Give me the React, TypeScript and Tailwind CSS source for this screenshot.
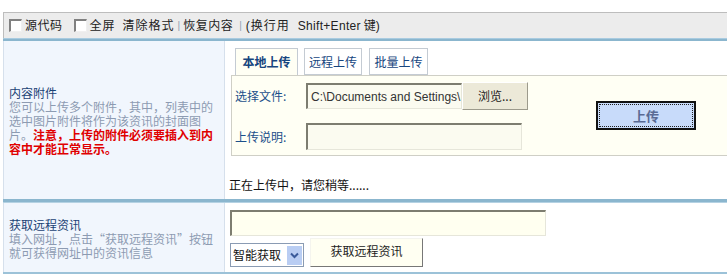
import React from "react";

function CheckBox() {
  return (
    <span className="inline-block w-[13px] h-[13px] bg-white border-t-2 border-l-2 border-t-[#808080] border-l-[#808080] border-r border-b border-r-[#f0f0f0] border-b-[#f0f0f0]" />
  );
}

export default function App() {
  return (
    <div className="w-[727px] h-[275px] bg-white overflow-hidden text-[12px] leading-[14px] font-['Liberation_Sans','Noto_Sans_CJK_SC',sans-serif]">
      <div className="h-[12px]" />
      {/* toolbar */}
      <div className="ml-[3px] h-[26px] bg-[#ececec] border-t border-l border-[#bdbdbd] flex items-center text-[#222] whitespace-nowrap">
        <span className="ml-[5px] flex"><CheckBox /></span>
        <span className="ml-[3px] tracking-[0.5px]">源代码</span>
        <span className="ml-[11px] flex"><CheckBox /></span>
        <span className="ml-[3px] tracking-[1px]">全屏</span>
        <span className="ml-[7px] tracking-[1px]">清除格式</span>
        <span className="ml-[3px] text-[#8fa0b0] text-[10px]">|</span>
        <span className="ml-[3px] tracking-[0.5px]">恢复内容</span>
        <span className="ml-[6px] text-[#8fa0b0] text-[10px]">|</span>
        <span className="ml-[4px] tracking-[1px]">(换行用</span>
        <span className="ml-[8px] tracking-[0.3px]">Shift+Enter</span>
        <span className="ml-[3px]">键)</span>
      </div>
      <div className="ml-[3px] h-[3px] bg-[#8bb6ce] border-t border-[#a9cbe0]" />

      {/* section 1 */}
      <div className="ml-[3px] h-[158px] flex">
        <div className="w-[222px] bg-[#f1f6fd] border-l border-r border-[#d6e0ec] flex items-center pl-[5px] pr-[6px] font-['Noto_Sans_CJK_SC',sans-serif]">
          <div className="w-[208px] pt-[2px]">
            <div className="text-[#1b4275]">内容附件</div>
            <div className="text-[#8d9bb2]">
              您可以上传多个附件，其中，列表中的选中图片附件将作为该资讯的封面图片。
              <span className="text-[#e00000] font-bold">注意，上传的附件必须要插入到内容中才能正常显示。</span>
            </div>
          </div>
        </div>
        <div className="flex-1 pt-[7px]">
          {/* tabs */}
          <div className="ml-[10px] flex items-end h-[27px] gap-[6px]">
            <div className="w-[63px] h-[27px] border border-b-0 border-[#c4cbd3] bg-[#fffff4] flex items-center justify-center text-[#16457e] font-bold font-['Noto_Sans_CJK_SC',sans-serif]">本地上传</div>
            <div className="w-[58px] h-[27px] border border-[#c4cbd3] bg-white flex items-center justify-center text-[#16457e] font-['Noto_Sans_CJK_SC',sans-serif]">远程上传</div>
            <div className="w-[59px] h-[27px] border border-[#c4cbd3] bg-white flex items-center justify-center text-[#16457e] ml-[1px] font-['Noto_Sans_CJK_SC',sans-serif]">批量上传</div>
          </div>
          {/* panel */}
          <div className="ml-[6px] h-[81px] border-t border-b border-l border-[#cfcfc6] bg-[#fffff4] flex items-center">
            <div className="flex flex-col gap-[13px] pl-[3px] pt-[1px]">
              <div className="flex items-center h-[28px]">
                <span className="w-[71px] text-[#1c4f8a] font-['Noto_Sans_CJK_SC',sans-serif]">选择文件:</span>
                <div className="w-[156px] h-[26px] bg-[#fbfbf0] border-t-2 border-l-2 border-t-[#7d7d70] border-l-[#7d7d70] border-r border-b border-r-[#e6e6da] border-b-[#e6e6da] flex items-center pl-[3px] overflow-hidden whitespace-nowrap text-[#333]">
                  C:\Documents and Settings\
                </div>
                <div className="w-[66px] h-[28px] bg-[#ece9d8] border border-t-white border-l-white border-r-[#9c9a8c] border-b-[#9c9a8c] flex items-center justify-center text-[#222] font-['Noto_Sans_CJK_SC',sans-serif]">
                  浏览...
                </div>
              </div>
              <div className="flex items-center h-[27px]">
                <span className="w-[71px] text-[#1c4f8a] font-['Noto_Sans_CJK_SC',sans-serif]">上传说明:</span>
                <div className="w-[216px] h-[27px] bg-[#fbfbf0] border-t-2 border-l-2 border-t-[#7d7d70] border-l-[#7d7d70] border-r border-b border-r-[#e6e6da] border-b-[#e6e6da]" />
              </div>
            </div>
            <div className="ml-[68px] w-[100px] h-[29px] bg-[#c8dbfa] border-2 border-[#111] p-[1px]">
              <div className="w-full h-full border border-dotted border-[#222] flex items-center justify-center text-[#5a6b95] font-bold text-[13px] font-['Noto_Sans_CJK_SC',sans-serif]">
                上传
              </div>
            </div>
          </div>
          <div className="mt-[22px] ml-[4px] text-[#111] font-['Noto_Sans_CJK_SC',sans-serif]">正在上传中，请您稍等......</div>
        </div>
      </div>
      <div className="ml-[3px] h-[4px] bg-[#8bb6ce] border-b border-[#b5d2e3]" />

      {/* section 2 */}
      <div className="ml-[3px] h-[69px] flex">
        <div className="w-[222px] bg-[#f1f6fd] border-l border-r border-[#d6e0ec] flex items-center pl-[5px] pr-[6px] font-['Noto_Sans_CJK_SC',sans-serif]">
          <div className="w-[208px] pt-[2px]">
            <div className="text-[#1b4275]">获取远程资讯</div>
            <div className="text-[#8d9bb2]">填入网址，点击“获取远程资讯”按钮就可获得网址中的资讯信息</div>
          </div>
        </div>
        <div className="flex-1 pt-[7px] pl-[5px]">
          <div className="w-[316px] h-[26px] bg-[#fffff0] border-t-2 border-l-2 border-t-[#7d7d70] border-l-[#7d7d70] border-r border-b border-r-[#e6e6da] border-b-[#e6e6da]" />
          <div className="flex items-end mt-[2px]">
            <div className="w-[74px] h-[24px] bg-white border border-[#8a9bb3] flex items-center pl-[2px] pr-[1px] font-['Noto_Sans_CJK_SC',sans-serif] text-[#111]">
              <span className="flex-1">智能获取</span>
              <span className="w-[15px] h-[19px] bg-[#b9cdf3] flex items-center justify-center">
                <svg width="9" height="7" viewBox="0 0 9 7">
                  <path d="M1 1.5 L4.5 5 L8 1.5" stroke="#3a5a9a" strokeWidth="2" fill="none" />
                </svg>
              </span>
            </div>
            <div className="ml-[6px] w-[113px] h-[29px] bg-[#fffff2] border border-t-[#f4f4ee] border-l-[#f4f4ee] border-r-[#777] border-b-[#777] flex items-center justify-center pb-[4px] text-[#222] font-['Noto_Sans_CJK_SC',sans-serif]">
              获取远程资讯
            </div>
          </div>
        </div>
      </div>
      <div className="ml-[3px] h-[2px] bg-[#9cc2d8]" />
    </div>
  );
}
